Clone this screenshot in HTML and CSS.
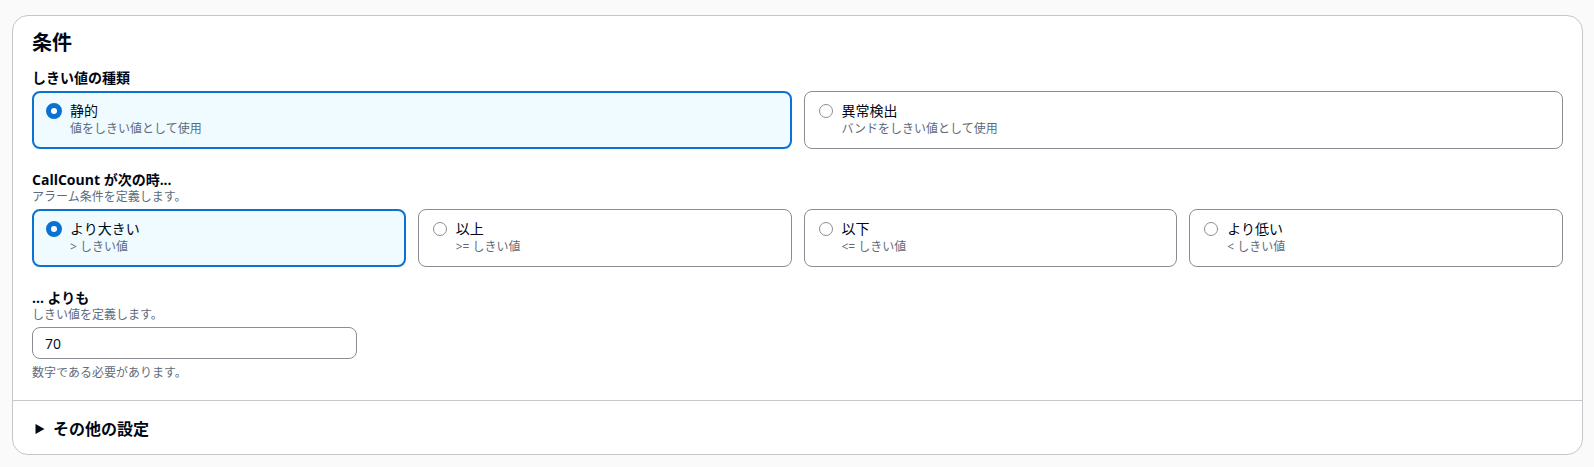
FILE: index.html
```html
<!DOCTYPE html>
<html lang="ja">
<head>
<meta charset="utf-8">
<title>条件</title>
<link rel="stylesheet" href="styles.css">
</head>
<body>
<section class="container">
  <div class="container-body">
    <h2 class="title">条件</h2>

    <div class="field field-first">
      <div class="field-label">しきい値の種類</div>
      <div class="tiles tiles-2">
        <div class="tile is-selected">
          <span class="radio"><svg width="16" height="16" viewBox="0 0 16 16"><circle cx="8" cy="8" r="5.5" fill="#fff" stroke="#0972d3" stroke-width="5"/></svg></span>
          <span class="tile-text">
            <span class="tile-label">静的</span>
            <span class="tile-desc">値をしきい値として使用</span>
          </span>
        </div>
        <div class="tile">
          <span class="radio"><svg width="16" height="16" viewBox="0 0 16 16"><circle cx="8" cy="8" r="6.5" fill="#fff" stroke="#8c8c94" stroke-width="1"/></svg></span>
          <span class="tile-text">
            <span class="tile-label">異常検出</span>
            <span class="tile-desc">バンドをしきい値として使用</span>
          </span>
        </div>
      </div>
    </div>

    <div class="field">
      <div class="field-label">CallCount が次の時...</div>
      <div class="field-desc">アラーム条件を定義します。</div>
      <div class="tiles tiles-4">
        <div class="tile is-selected">
          <span class="radio"><svg width="16" height="16" viewBox="0 0 16 16"><circle cx="8" cy="8" r="5.5" fill="#fff" stroke="#0972d3" stroke-width="5"/></svg></span>
          <span class="tile-text">
            <span class="tile-label">より大きい</span>
            <span class="tile-desc">&gt; しきい値</span>
          </span>
        </div>
        <div class="tile">
          <span class="radio"><svg width="16" height="16" viewBox="0 0 16 16"><circle cx="8" cy="8" r="6.5" fill="#fff" stroke="#8c8c94" stroke-width="1"/></svg></span>
          <span class="tile-text">
            <span class="tile-label">以上</span>
            <span class="tile-desc">&gt;= しきい値</span>
          </span>
        </div>
        <div class="tile">
          <span class="radio"><svg width="16" height="16" viewBox="0 0 16 16"><circle cx="8" cy="8" r="6.5" fill="#fff" stroke="#8c8c94" stroke-width="1"/></svg></span>
          <span class="tile-text">
            <span class="tile-label">以下</span>
            <span class="tile-desc">&lt;= しきい値</span>
          </span>
        </div>
        <div class="tile">
          <span class="radio"><svg width="16" height="16" viewBox="0 0 16 16"><circle cx="8" cy="8" r="6.5" fill="#fff" stroke="#8c8c94" stroke-width="1"/></svg></span>
          <span class="tile-text">
            <span class="tile-label">より低い</span>
            <span class="tile-desc">&lt; しきい値</span>
          </span>
        </div>
      </div>
    </div>

    <div class="field">
      <div class="field-label">... よりも</div>
      <div class="field-desc">しきい値を定義します。</div>
      <div class="input-wrap">
        <input class="input" type="text" value="70">
      </div>
      <div class="field-hint">数字である必要があります。</div>
    </div>
  </div>

  <div class="container-footer">
    <div class="expander">
      <svg class="caret" width="10" height="12" viewBox="0 0 10 12"><polygon points="0.5,1 9.5,6 0.5,11" fill="#000716"/></svg>
      <span class="expander-label">その他の設定</span>
    </div>
  </div>
</section>
</body>
</html>
```

FILE: styles.css
```css
* {
  box-sizing: border-box;
}

html,
body {
  margin: 0;
  padding: 0;
}

body {
  background: #fafafa;
  font-family: "Open Sans", "Noto Sans CJK JP", sans-serif;
  color: #000716;
  font-size: 14px;
  line-height: 20px;
}

.container {
  margin: 15px 11px 12px 12px;
  background: #ffffff;
  border: 1px solid #c6c6cd;
  border-radius: 16px;
}

.container-body {
  padding: 15px 19px 19px;
}

.title {
  margin: 0;
  font-size: 20px;
  line-height: 24px;
  font-weight: 700;
}

.field {
  display: flex;
  flex-direction: column;
  margin-top: 22px;
}

.field-first {
  margin-top: 14px;
}

.field-label {
  font-size: 14px;
  line-height: 18px;
  font-weight: 700;
}

.field-desc,
.field-hint {
  font-size: 12px;
  line-height: 16px;
  color: #5f6b7a;
}

.field-hint {
  margin-top: 6px;
}

.tiles {
  display: grid;
  gap: 12px;
  margin-top: 4px;
}

.tiles-2 {
  grid-template-columns: repeat(2, 1fr);
}

.tiles-4 {
  grid-template-columns: repeat(4, 1fr);
}

.tile {
  display: flex;
  align-items: flex-start;
  gap: 8px;
  height: 58px;
  padding: 9px 12px 0 13px;
  border: 1px solid #8c8c94;
  border-radius: 8px;
  background: #ffffff;
}

.tile.is-selected {
  padding: 8px 11px 0 12px;
  border: 2px solid #0972d3;
  background: #f0fbff;
}

.radio {
  display: flex;
  align-items: center;
  height: 20px;
  flex: 0 0 16px;
}

.radio svg {
  display: block;
}

.tile-text {
  display: flex;
  flex-direction: column;
}

.tile-label {
  font-size: 14px;
  line-height: 20px;
}

.tile-desc {
  font-size: 12px;
  line-height: 16px;
  color: #5f6b7a;
}

.input-wrap {
  margin-top: 4px;
}

.input {
  display: block;
  width: 325px;
  height: 32px;
  padding: 0 12px;
  border: 1px solid #8c8c94;
  border-radius: 8px;
  background: #ffffff;
  font-family: "Open Sans", "Noto Sans CJK JP", sans-serif;
  font-size: 14px;
  color: #000716;
  outline: none;
}

.container-footer {
  border-top: 1px solid #c6c6cd;
  padding: 18px 19px 15px;
}

.expander {
  display: flex;
  align-items: center;
  height: 20px;
}

.caret {
  display: block;
  margin-left: 3px;
}

.expander-label {
  margin-left: 8px;
  font-size: 16px;
  line-height: 20px;
  font-weight: 700;
}
```
